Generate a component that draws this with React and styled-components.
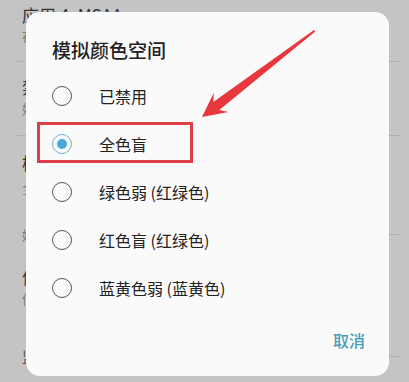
import React from "react";
import styled, { createGlobalStyle } from "styled-components";

const Global = createGlobalStyle`
  html, body { margin: 0; padding: 0; }
  body {
    width: 409px; height: 382px; overflow: hidden;
    background: #c4c4c4;
    font-family: "Noto Sans CJK SC", "Noto Sans", sans-serif;
  }
`;

const Screen = styled.div`
  position: relative;
  width: 409px;
  height: 382px;
  overflow: hidden;
  background: #c4c4c4;
`;

/* ---------- dimmed settings page behind the dialog ---------- */
const Settings = styled.div`
  display: flex;
  flex-direction: column;
  padding-left: 22px;
  padding-top: 4px;
`;

const ItemTitle = styled.div`
  font-size: 17px;
  line-height: 22px;
  color: #353535;
  margin-top: ${(p) => p.$mt || 0}px;
  white-space: nowrap;
`;

const ItemSub = styled.div`
  font-size: 13px;
  line-height: 18px;
  color: ${(p) => (p.$accent ? "#5b9894" : "#7a7a7a")};
  margin-top: ${(p) => p.$mt || 0}px;
  white-space: nowrap;
`;

const Divider = styled.div`
  height: 1px;
  background: #b0b0b0;
  margin-left: -5px;
  margin-right: 9px;
  margin-top: ${(p) => p.$mt || 0}px;
`;

const RuledLine = styled.div`
  display: flex;
  align-items: center;
  height: 18px;
  margin-top: ${(p) => p.$mt || 0}px;
  font-size: ${(p) => p.$size || 13}px;
  color: ${(p) => p.$color || "#7a7a7a"};
  white-space: nowrap;
  &::after {
    content: "";
    flex: 1;
    height: 1px;
    margin-left: 80px;
    margin-right: 9px;
    background: #b0b0b0;
  }
`;

/* ---------- dialog ---------- */
const Dialog = styled.div`
  position: absolute;
  left: 26px;
  top: 12px;
  width: 363px;
  height: 364px;
  box-sizing: border-box;
  background: #fafafa;
  border-radius: 14px;
  padding: 25px 24px 0 26px;
  display: flex;
  flex-direction: column;
`;

const Title = styled.div`
  font-size: 19px;
  line-height: 26px;
  font-weight: 500;
  color: #212121;
`;

const Options = styled.div`
  display: flex;
  flex-direction: column;
  margin-top: 9px;
`;

const Option = styled.div`
  display: flex;
  align-items: center;
  height: 48px;
  gap: 27px;
`;

const Radio = styled.span`
  width: 20px;
  height: 20px;
  box-sizing: border-box;
  border-radius: 50%;
  border: 1.6px solid ${(p) => (p.$checked ? "#66b5d6" : "#555")};
  display: flex;
  align-items: center;
  justify-content: center;
  flex: none;
  &::after {
    content: "";
    width: 10px;
    height: 10px;
    border-radius: 50%;
    background: #48a8da;
    display: ${(p) => (p.$checked ? "block" : "none")};
  }
`;

const OptionLabel = styled.span`
  font-size: 16px;
  line-height: 22px;
  color: #222;
`;

const Actions = styled.div`
  display: flex;
  justify-content: flex-end;
  margin-top: 16px;
`;

const TextButton = styled.span`
  font-size: 16px;
  line-height: 24px;
  font-weight: 500;
  color: #4a9cb8;
`;

/* ---------- annotation overlays ---------- */
const Highlight = styled.div`
  position: absolute;
  left: 37px;
  top: 122px;
  width: 156px;
  height: 41px;
  box-sizing: border-box;
  border: 3px solid #dc3f49;
`;

const ArrowLayer = styled.svg`
  position: absolute;
  left: 0;
  top: 0;
  pointer-events: none;
`;

const options = ["已禁用", "全色盲", "绿色弱 (红绿色)", "红色盲 (红绿色)", "蓝黄色弱 (蓝黄色)"];

export default function App() {
  return (
    <>
      <Global />
      <Screen>
        <Settings>
          <ItemTitle>应用 4: MSAA</ItemTitle>
          <ItemSub $mt={1}>在应</ItemSub>
          <Divider $mt={16} />
          <ItemTitle $mt={14}>禁用</ItemTitle>
          <ItemSub $mt={2}>始终</ItemSub>
          <Divider $mt={17} />
          <ItemTitle $mt={16}>模拟</ItemTitle>
          <ItemSub $accent $mt={5}>全色</ItemSub>
          <RuledLine $mt={28}>媒体</RuledLine>
          <ItemTitle $mt={23}>停用</ItemTitle>
          <ItemSub $mt={2}>停用</ItemSub>
          <RuledLine $mt={39} $size={15} $color="#555">监控</RuledLine>
        </Settings>

        <Dialog>
          <Title>模拟颜色空间</Title>
          <Options>
            {options.map((o, i) => (
              <Option key={o}>
                <Radio $checked={i === 1} />
                <OptionLabel>{o}</OptionLabel>
              </Option>
            ))}
          </Options>
          <Actions>
            <TextButton>取消</TextButton>
          </Actions>
        </Dialog>

        <Highlight />
        <ArrowLayer width="409" height="382" viewBox="0 0 409 382">
          <polygon
            fill="#e8383d"
            points="202,117 228.3,111.9 219.3,110.1 315.2,31.6 314,30 213.3,102.1 213.7,92.9"
          />
        </ArrowLayer>
      </Screen>
    </>
  );
}
